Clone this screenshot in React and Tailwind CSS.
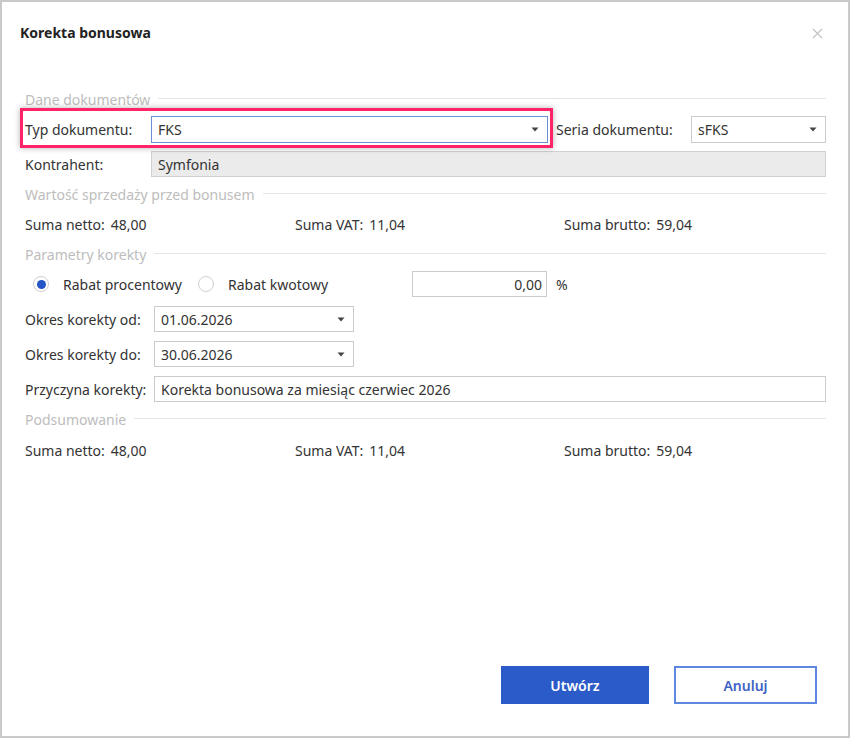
const font = { fontFamily: '"Noto Sans", "Open Sans", Arial, sans-serif' }

function Caret() {
  return (
    <svg width="8" height="5" viewBox="0 0 8 5" className="shrink-0">
      <path d="M0.5 0.5 L7.5 0.5 L4 4.5 Z" fill="#444" />
    </svg>
  )
}

function GroupHeader({ title, className = '' }) {
  return (
    <div className={`flex items-center h-[20px] ${className}`}>
      <span className="text-[14px] text-[#bdbdbd] whitespace-nowrap leading-none">{title}</span>
      <div className="flex-1 h-px bg-[#e4e4e4] ml-[8px] -mt-[3px]" />
    </div>
  )
}

function Select({ value, className = '', focused = false }) {
  return (
    <div
      className={`flex items-center justify-between h-full pl-[6px] pr-[8px] bg-white border ${
        focused ? 'border-[#6b8fd6]' : 'border-[#cbcbcb]'
      } ${className}`}
    >
      <span className="text-[14px] text-[#333]">{value}</span>
      <Caret />
    </div>
  )
}

function Totals({ className = '' }) {
  const items = [
    ['Suma netto:', '48,00', 'w-[270px]'],
    ['Suma VAT:', '11,04', 'w-[269px]'],
    ['Suma brutto:', '59,04', ''],
  ]
  return (
    <div className={`flex items-center h-[20px] text-[14px] text-[#333] ${className}`}>
      {items.map(([label, val, w]) => (
        <div key={label} className={`flex gap-[6px] ${w}`}>
          <span>{label}</span>
          <span>{val}</span>
        </div>
      ))}
    </div>
  )
}

function Radio({ checked }) {
  return (
    <span className="w-[16px] h-[16px] rounded-full border border-[#cfcfcf] bg-white flex items-center justify-center shrink-0">
      {checked && <span className="w-[9px] h-[9px] rounded-full bg-[#2456c8]" />}
    </span>
  )
}

export default function App() {
  return (
    <div
      style={font}
      className="w-[850px] h-[738px] bg-white border-2 border-[#c9c9c9] flex flex-col"
    >
      {/* header */}
      <div className="h-[60px] flex items-center justify-between pl-[18px] pr-[25px]">
        <h1 className="text-[14px] font-bold text-[#222]">Korekta bonusowa</h1>
        <svg width="11" height="11" viewBox="0 0 11 11" className="mt-[3px]">
          <path d="M1 1 L10 10 M10 1 L1 10" stroke="#c6c6c6" strokeWidth="1.4" />
        </svg>
      </div>

      <div className="pl-[23px] pr-[22px] flex flex-col">
        <GroupHeader title="Dane dokumentów" className="mt-[28px]" />

        {/* Typ / Seria */}
        <div className="flex items-center h-[27px] mt-[6px] relative">
          <div className="absolute -left-[5px] -top-[8px] w-[533px] h-[40px] border-[3px] border-[#ff2468] shadow-[0_0_6px_rgba(0,0,0,0.3)] pointer-events-none" />
          <span className="w-[126px] text-[14px] text-[#333]">Typ dokumentu:</span>
          <Select value="FKS" focused className="w-[397px]" />
          <span className="ml-[8px] w-[135px] text-[14px] text-[#333]">Seria dokumentu:</span>
          <Select value="sFKS" className="flex-1" />
        </div>

        {/* Kontrahent */}
        <div className="flex items-center h-[26px] mt-[8px]">
          <span className="w-[126px] text-[14px] text-[#333]">Kontrahent:</span>
          <div className="flex-1 h-full bg-[#ebebeb] border border-[#d0d0d0] flex items-center pl-[6px]">
            <span className="text-[14px] text-[#333]">Symfonia</span>
          </div>
        </div>

        <GroupHeader title="Wartość sprzedaży przed bonusem" className="mt-[8px]" />
        <Totals className="mt-[9px]" />

        <GroupHeader title="Parametry korekty" className="mt-[11px]" />

        {/* Radio row */}
        <div className="flex items-center h-[26px] mt-[6px] text-[14px] text-[#333]">
          <div className="flex items-center gap-[14px] ml-[8px]">
            <Radio checked />
            <span>Rabat procentowy</span>
          </div>
          <div className="flex items-center gap-[14px] ml-[16px]">
            <Radio />
            <span>Rabat kwotowy</span>
          </div>
          <div className="ml-[84px] w-[135px] h-full border border-[#cbcbcb] flex items-center justify-end pr-[4px]">
            0,00
          </div>
          <span className="ml-[9px]">%</span>
        </div>

        {/* Okres od */}
        <div className="flex items-center h-[26px] mt-[9px]">
          <span className="w-[129px] text-[14px] text-[#333]">Okres korekty od:</span>
          <Select value="01.06.2026" className="w-[200px]" />
        </div>

        {/* Okres do */}
        <div className="flex items-center h-[26px] mt-[9px]">
          <span className="w-[129px] text-[14px] text-[#333]">Okres korekty do:</span>
          <Select value="30.06.2026" className="w-[200px]" />
        </div>

        {/* Przyczyna */}
        <div className="flex items-center h-[26px] mt-[9px]">
          <span className="w-[129px] text-[14px] text-[#333]">Przyczyna korekty:</span>
          <div className="flex-1 h-full border border-[#cbcbcb] flex items-center pl-[6px]">
            <span className="text-[14px] text-[#333]">Korekta bonusowa za miesiąc czerwiec 2026</span>
          </div>
        </div>

        <GroupHeader title="Podsumowanie" className="mt-[8px]" />
        <Totals className="mt-[10px]" />
      </div>

      {/* footer buttons */}
      <div className="mt-auto mb-[32px] flex justify-end gap-[25px] pr-[31px]">
        <button className="w-[148px] h-[38px] bg-[#2a5bc8] text-white text-[14px] font-semibold">
          Utwórz
        </button>
        <button className="w-[143px] h-[38px] bg-white border-2 border-[#5d88e0] text-[#3d64c4] text-[14px] font-semibold">
          Anuluj
        </button>
      </div>
    </div>
  )
}
